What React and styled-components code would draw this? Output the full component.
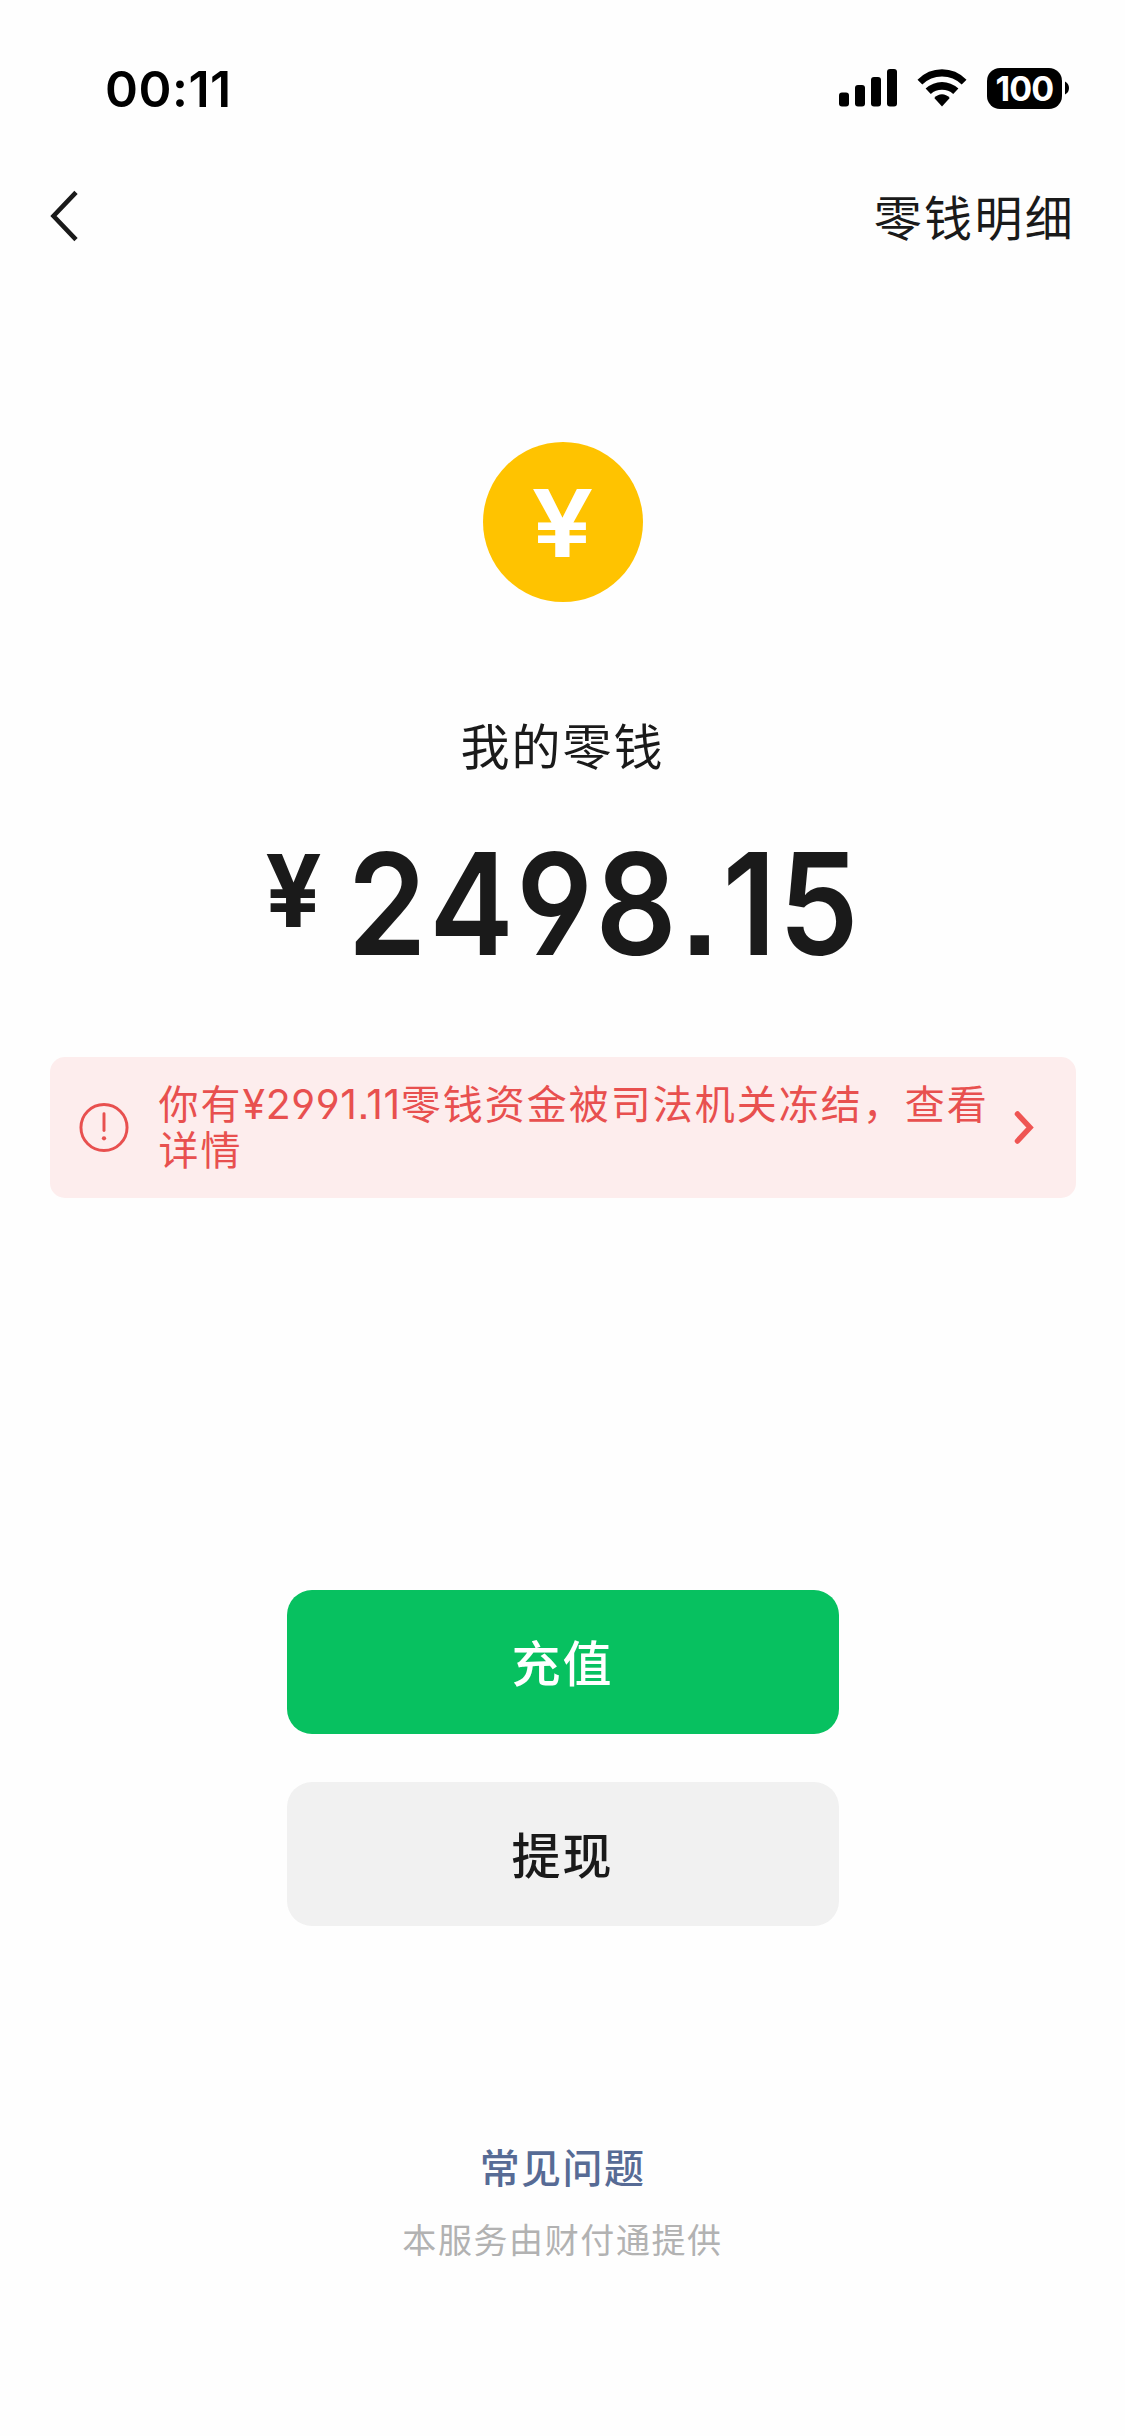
import React from 'react'
import styled, { createGlobalStyle } from 'styled-components';

const GlobalStyle = createGlobalStyle`
  * {
    box-sizing: border-box;
  }
  body {
    margin: 0;
    background: #fff;
    font-family: "Noto Sans CJK SC", sans-serif;
    color: #1a1a1a;
  }
`
const Page = styled.div`
  width: 1125px;
  height: 2436px;
  display: flex;
  flex-direction: column;
  align-items: center;
  background: #fefefe;
  overflow: hidden;
`
const StatusBar = styled.div`
  width: 100%;
  height: 176px;
  padding: 0 56px 0 105px;
  display: flex;
  justify-content: space-between;
  align-items: center;
  color: #000;
`
const Time = styled.div`
  padding-top: 2px;
  font: 600 50px/60px "Inter", sans-serif;
  letter-spacing: 0.5px;
`
const StatusIcons = styled.div`
  display: flex;
  align-items: center;
  gap: 20px;
`
const Battery = styled.div`
  display: flex;
  align-items: center;
  gap: 3px;
`
const BatteryBody = styled.div`
  width: 75px;
  height: 41px;
  border-radius: 13px;
  background: #000;
  color: #fff;
  font: 700 34px/41px "Inter", sans-serif;
  letter-spacing: -0.9px;
  text-align: center;
`
const NavBar = styled.div`
  width: 100%;
  height: 80px;
  padding: 0 50px 0 50px;
  display: flex;
  justify-content: space-between;
  align-items: center;
`
const NavLink = styled.div`
  padding-bottom: 2px;
  font-size: 48px;
  line-height: 72px;
  letter-spacing: 2.3px;
`
const Coin = styled.div`
  width: 160px;
  height: 160px;
  margin-top: 186px;
  border-radius: 50%;
  background: #ffc300;
  color: #fff;
  font: 600 94px/162px "Inter", sans-serif;
  text-align: center;
`
const CoinSign = styled.span`
  display: inline-block;
  transform: scaleX(1.17);
`
const Label = styled.div`
  margin-top: 106px;
  font-size: 49px;
  line-height: 72px;
  letter-spacing: 2px;
`
const Amount = styled.div`
  height: 150px;
  margin-top: 49px;
  padding-left: 27px;
  display: flex;
  justify-content: center;
  align-items: flex-start;
  font-family: "Inter", sans-serif;
  font-weight: 600;
  font-feature-settings: "cv04", "ss07";
  font-kerning: none;
`
const Currency = styled.span`
  margin: 0 -3px 0 3px;
  font-size: 100px;
  font-weight: 700;
  line-height: 123px;
  transform: scaleX(0.99);
`
const Digits = styled.span`
  font-size: 141px;
  line-height: 150px;
  letter-spacing: 2.9px;
  transform: scaleX(0.9);
`
const Notice = styled.div`
  width: 1026px;
  height: 141px;
  margin-top: 78px;
  padding: 0 42px 0 28px;
  display: flex;
  align-items: center;
  border-radius: 15px;
  background: #fdeded;
  color: #e8504f;
`
const NoticeText = styled.div`
  flex: 1;
  margin-left: 29px;
  padding-bottom: 6px;
  font-size: 40px;
  line-height: 46px;
  letter-spacing: 2px;
  white-space: nowrap;
`
const Sum = styled.span`
  font-family: "Inter", sans-serif;
  font-size: 41px;
  line-height: 40px;
  letter-spacing: 0.6px;
  font-feature-settings: "cv04", "ss07";
`
const Buttons = styled.div`
  margin-top: 392px;
  display: flex;
  flex-direction: column;
  gap: 48px;
`
const Button = styled.button`
  width: 552px;
  height: 144px;
  padding: 0 0 3px;
  border: 0;
  border-radius: 25px;
  background: ${p => p.$primary ? '#07c160' : '#f1f1f1'};
  color: ${p => p.$primary ? '#fff' : '#1a1a1a'};
  font: 500 49px/140px "Noto Sans CJK SC", sans-serif;
  letter-spacing: 2px;
`
const Faq = styled.div`
  margin-top: 210px;
  color: #576b95;
  font-size: 40px;
  font-weight: 500;
  line-height: 60px;
  letter-spacing: 1.4px;
`
const Provider = styled.div`
  margin-top: 18px;
  color: #b2b2b2;
  font-size: 34px;
  line-height: 50px;
  letter-spacing: 1.6px;
`

const SignalIcon = () => (
  <svg width="58" height="38" viewBox="0 0 58 38">
    <rect x="0" y="23.5" width="10" height="14" rx="3" />
    <rect x="16" y="16" width="10" height="21.5" rx="3" />
    <rect x="32" y="8" width="10" height="29.5" rx="3" />
    <rect x="48" y="0" width="10" height="37.5" rx="3" />
  </svg>
)

const WifiIcon = () => (
  <svg width="50" height="38" viewBox="0 0 50 38">
    <path d="M0.5 10.7Q11 0.3 25 0.3T49.5 10.7L44.7 15.6Q36.5 7.6 25 7.6T5.3 15.6Z" />
    <path d="M8.6 19.6Q16 13 25 13T41.4 19.6L36.2 24.9Q31.5 20.7 25 20.7T13.8 24.9Z" />
    <path d="M17.3 29Q20.7 25.3 25 25.3T32.7 29L25 37.5Z" />
  </svg>
)

const BackIcon = () => (
  <svg width="28" height="52" viewBox="0 0 28 52" fill="none" stroke="#1a1a1a" strokeWidth="4.6">
    <path d="M26 2.3L3.5 26L26 49.7" />
  </svg>
)

const WarnIcon = () => (
  <svg width="52" height="52" viewBox="0 0 52 53" fill="none" stroke="#e8504f">
    <circle cx="26" cy="26" r="23.5" strokeWidth="3" />
    <path d="M26 12V29" strokeWidth="3" strokeLinecap="round" />
    <circle cx="26" cy="37" r="2.2" fill="#e8504f" stroke="none" />
  </svg>
)

const MoreIcon = () => (
  <svg width="20" height="36" viewBox="0 0 20 36" fill="none" stroke="#ef5553" strokeWidth="5.5" strokeLinecap="round">
    <path d="M3.5 4L16 17.5L3.5 31" />
  </svg>
)

const App = () => {
  return (
    <>
      <GlobalStyle />
      <Page>
        <StatusBar>
          <Time>00:11</Time>
          <StatusIcons>
            <SignalIcon />
            <WifiIcon />
            <Battery>
              <BatteryBody>100</BatteryBody>
              <svg width="4" height="14" viewBox="0 0 4 14"><path d="M0 0.5Q4 2.5 4 7T0 13.5Z" /></svg>
            </Battery>
          </StatusIcons>
        </StatusBar>
        <NavBar>
          <BackIcon />
          <NavLink>零钱明细</NavLink>
        </NavBar>

        <Coin><CoinSign>¥</CoinSign></Coin>
        <Label>我的零钱</Label>
        <Amount>
          <Currency>¥</Currency>
          <Digits>2498.15</Digits>
        </Amount>

        <Notice>
          <WarnIcon />
          <NoticeText>
            你有<Sum>¥2991.11</Sum>零钱资金被司法机关冻结，查看<br />详情
          </NoticeText>
          <MoreIcon />
        </Notice>

        <Buttons>
          <Button $primary>充值</Button>
          <Button>提现</Button>
        </Buttons>

        <Faq>常见问题</Faq>
        <Provider>本服务由财付通提供</Provider>
      </Page>
    </>
  )
}

export default App
